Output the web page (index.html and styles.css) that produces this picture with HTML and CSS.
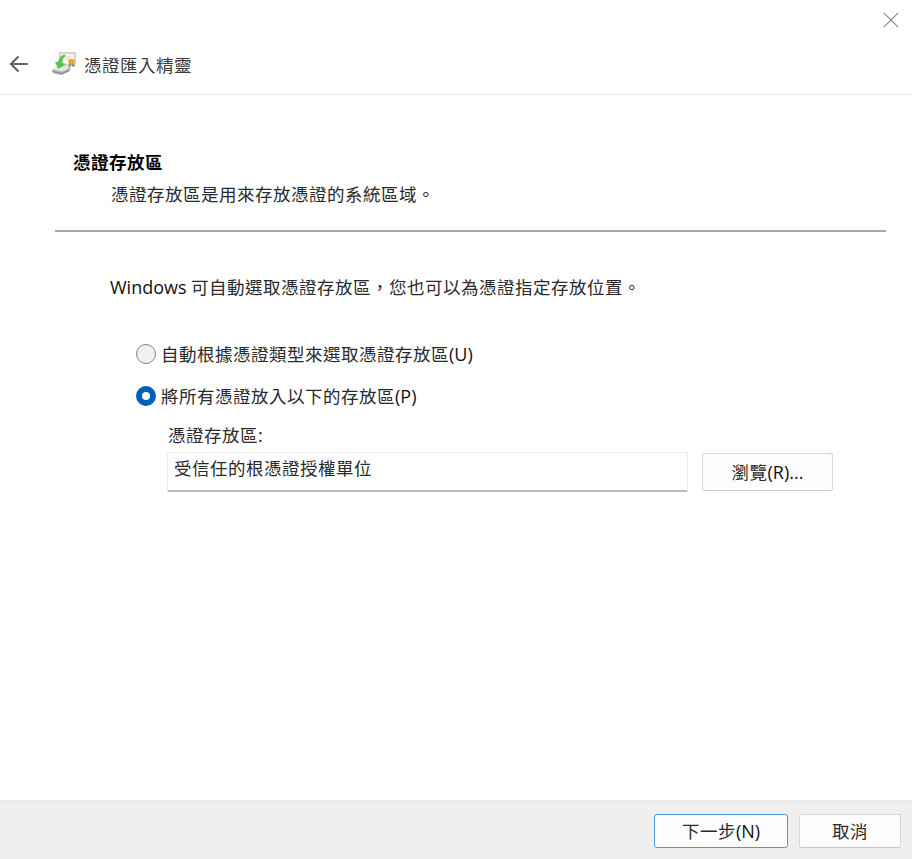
FILE: index.html
```html
<!DOCTYPE html>
<html lang="zh-Hant">
<head>
<meta charset="utf-8">
<title>憑證匯入精靈</title>
<link rel="stylesheet" href="styles.css">
</head>
<body>
<div class="wizard">
  <header class="titlebar">
    <svg class="back" width="20" height="18" viewBox="0 0 20 18"><path d="M19 9H2.5M9.5 1.5L2 9L9.5 16.5"/></svg>
    <svg class="app-icon" width="26" height="26" viewBox="0 0 26 26">
      <path d="M7 1h17v14H7z" fill="#dfd2bd"/>
      <path d="M9 3h13v10H9z" fill="#f7f5ef"/>
      <path d="M13 6h6M13 8h5" stroke="#d5d4cf"/>
      <path d="M0 19l6-4 13 1-1 4-8 4-7-1-3-2z" fill="#b3b5b7"/>
      <path d="M1 18.500l5-3 12 1-8 4z" fill="#e6e7e8"/>
      <path d="M1 20.500l9 2 7-3" fill="none" stroke="#85888b"/>
      <path d="M13 4c-3.500 0-5.500 3-6.500 7l-3 .5 3 6 6.500-4.500-3-.7c0-4 .8-6 3-7z" fill="#4ccb48" stroke="#3cb341" stroke-width=".5"/>
      <path d="M17.500 11l-1 5 2-.5 1-2.500 1 2.500 2 .5-1-5z" fill="#5a7fb4"/>
      <circle cx="19.500" cy="11" r="3" fill="#e0a02a"/>
      <circle cx="19.500" cy="11" r="1" fill="#efc050"/>
    </svg>
    <h1 class="title">憑證匯入精靈</h1>
    <svg class="close" width="16" height="16" viewBox="0 0 16 16"><path d="M.8.8l14.4 14.4M15.2.8L.8 15.2"/></svg>
  </header>
  <main class="content">
    <section class="heading">
      <h2>憑證存放區</h2>
      <p>憑證存放區是用來存放憑證的系統區域。</p>
    </section>
    <section class="form">
      <p class="intro"><span class="word">Windows</span>可自動選取憑證存放區，您也可以為憑證指定存放位置。</p>
      <label class="option"><input type="radio" name="store">自動根據憑證類型來選取憑證存放區<span class="key">(U)</span></label>
      <label class="option"><input type="radio" name="store" checked>將所有憑證放入以下的存放區<span class="key">(P)</span></label>
      <div class="store">
        <span class="store-label">憑證存放區<span class="key">:</span></span>
        <div class="store-row">
          <div class="field">受信任的根憑證授權單位</div>
          <button class="btn browse">瀏覽<span class="key">(R)...</span></button>
        </div>
      </div>
    </section>
  </main>
  <footer class="actions">
    <button class="btn next">下一步<span class="key">(N)</span></button>
    <button class="btn cancel">取消</button>
  </footer>
</div>
</body>
</html>
```
FILE: styles.css
```css
* { box-sizing: border-box; }
body {
  margin: 0;
  background: #fff;
  color: #2a2a2a;
  font: 17.5px/26px "Open Sans", "Noto Sans CJK TC", sans-serif;
  letter-spacing: .5px;
}
h1, h2, p { margin: 0; font-size: inherit; white-space: nowrap; }
.wizard { height: 859px; display: flex; flex-direction: column; overflow: hidden; }
.titlebar {
  position: relative;
  height: 95px;
  padding: 34px 0 0 9px;
  display: flex;
  align-items: center;
  border-bottom: 1px solid #e8e8e8;
}
.back { fill: none; stroke: #666; stroke-width: 2.2; }
.app-icon { margin-left: 23px; }
.title { margin-left: 6px; padding-top: 1px; font-weight: 400; color: #3a3a3a; }
.close { position: absolute; top: 12px; right: 13px; fill: none; stroke: #858585; stroke-width: 1.2; }
.content { flex: 1; padding: 54px 26px 0 55px; }
.heading { height: 83px; border-bottom: 2px solid #a6a6a6; }
.heading h2 { padding-left: 18px; font-weight: 700; color: #000; }
.heading p { padding: 6px 0 0 56px; }
.form { padding: 42px 0 0 55px; }
.word, .key { font-size: 18px; line-height: 1; letter-spacing: 0; color: #111; }
.word { display: inline-block; width: 81px; }
.option {
  display: flex;
  align-items: center;
  height: 26px;
  margin: 16px 0 0 26px;
}
.intro + .option { margin-top: 41px; }
.option input {
  appearance: none;
  width: 20px;
  height: 20px;
  margin: 0 5px 0 0;
  border: 1px solid #858585;
  border-radius: 50%;
  background: #f1f1f1;
}
.option input:checked { border: 6px solid #005fb8; background: #fff; }
.store { margin: 13px 0 0 58px; }
.store-label { display: block; }
.store-row { display: flex; gap: 14px; margin: 4px 0 0 -1px; }
.field {
  width: 521px;
  height: 40px;
  padding: 2px 6px;
  border: 1px solid #ececec;
  border-bottom: 2px solid #bcbcbc;
  border-radius: 2px;
}
.btn {
  padding: 0 0 1px;
  font: inherit;
  letter-spacing: inherit;
  color: inherit;
  background: #fdfdfd;
  border: 1px solid #d6d6d6;
  border-bottom-color: #c6c6c6;
  border-radius: 3px;
}
.browse { width: 131px; height: 38px; margin-top: 1px; }
.actions {
  height: 59px;
  padding: 13px 11px 0 0;
  display: flex;
  justify-content: flex-end;
  gap: 11px;
  background: #efefef;
  border-top: 1px solid #e9e9e9;
}
.next { width: 134px; height: 34px; border-color: #4c9ad6; }
.cancel { width: 102px; height: 34px; }
```
